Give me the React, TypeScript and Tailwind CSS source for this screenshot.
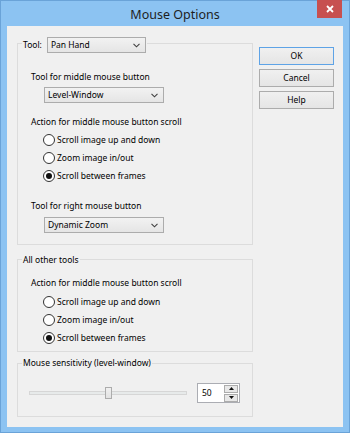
import React from "react";

const font = { fontFamily: '"Noto Sans", "Open Sans", sans-serif' };

// Win8 style combo box
const Combo = ({ value, width }: { value: string; width: string }) => (
  <div
    className={`${width} h-[16px] border border-[#acacac] bg-gradient-to-b from-[#f2f2f2] to-[#e5e5e5] flex items-center justify-between pl-[3px] pr-[5px]`}
  >
    <span className="text-[8.5px] leading-[14px] text-black">{value}</span>
    <svg width="7" height="5" viewBox="0 0 7 5">
      <polyline points="0.5,0.8 3.5,3.8 6.5,0.8" fill="none" stroke="#404040" strokeWidth="1.1" />
    </svg>
  </div>
);

const Radio = ({ label, checked }: { label: string; checked?: boolean }) => (
  <div className="h-[18px] flex items-center gap-[2px]">
    <div className="w-[12px] h-[12px] rounded-full border border-[#333333] bg-white flex items-center justify-center">
      {checked && <div className="w-[6px] h-[6px] rounded-full bg-[#111]" />}
    </div>
    <span className="text-[8.5px] leading-[14px] text-black">{label}</span>
  </div>
);

const Label = ({ children, className = "" }: { children: React.ReactNode; className?: string }) => (
  <div className={`h-[14px] text-[8.5px] leading-[14px] text-black ${className}`}>{children}</div>
);

const DlgButton = ({ label, primary }: { label: string; primary?: boolean }) => (
  <div
    className={`w-[75px] h-[18px] border ${primary ? "border-[#5ea3e6]" : "border-[#acacac]"} bg-gradient-to-b from-[#f0f0f0] to-[#e5e5e5] flex items-center justify-center text-[8.5px] text-black`}
  >
    {label}
  </div>
);

const ScrollRadios = () => (
  <div className="flex flex-col ml-[12px]">
    <Radio label="Scroll image up and down" />
    <Radio label="Zoom image in/out" />
    <Radio label="Scroll between frames" checked />
  </div>
);

export default function App() {
  return (
    <div className="w-[350px] h-[433px] bg-[#8cc3f2] border border-[#6aa3d8] flex flex-col select-none" style={font}>
      {/* title bar */}
      <div className="relative h-[25px] flex items-center justify-center">
        <span className="text-[12.5px] text-[#1e1e1e] mt-[3px]">Mouse Options</span>
        <div className="absolute -top-[1px] right-[7px] w-[25px] h-[18px] bg-[#c75050] flex items-center justify-center">
          <svg width="8" height="8" viewBox="0 0 8 8">
            <path d="M1 1 L7 7 M7 1 L1 7" stroke="white" strokeWidth="1.8" />
          </svg>
        </div>
      </div>

      {/* client area */}
      <div className="mx-[6px] h-[401px] bg-[#f0f0f0] flex pl-[10px] pt-[17px]">
        <div className="w-[236px] flex flex-col">
          {/* Tool group */}
          <div className="h-[202px] border border-[#dcdcdc] flex flex-col">
            <div className="-mt-[7px] ml-[4px] self-start bg-[#f0f0f0] px-[1px] h-[16px] flex items-center gap-[5px]">
              <span className="text-[8.5px] leading-[14px] text-black">Tool:</span>
              <Combo value="Pan Hand" width="w-[99px]" />
            </div>
            <div className="pl-[13px] flex flex-col">
              <Label className="mt-[17px]">Tool for middle mouse button</Label>
              <div className="mt-[3px] ml-[13px]">
                <Combo value="Level-Window" width="w-[120px]" />
              </div>
              <Label className="mt-[12px]">Action for middle mouse button scroll</Label>
              <div className="mt-[2px]">
                <ScrollRadios />
              </div>
              <Label className="mt-[14px]">Tool for right mouse button</Label>
              <div className="mt-[4px] ml-[13px]">
                <Combo value="Dynamic Zoom" width="w-[120px]" />
              </div>
            </div>
          </div>

          {/* All other tools group */}
          <div className="mt-[14px] h-[93px] border border-[#dcdcdc] flex flex-col">
            <div className="-mt-[7px] ml-[4px] self-start bg-[#f0f0f0] px-[1px]">
              <Label>All other tools</Label>
            </div>
            <div className="pl-[13px] flex flex-col">
              <Label className="mt-[9px]">Action for middle mouse button scroll</Label>
              <div className="mt-[3px]">
                <ScrollRadios />
              </div>
            </div>
          </div>

          {/* Sensitivity group */}
          <div className="mt-[11px] h-[54px] border border-[#dcdcdc] flex flex-col">
            <div className="-mt-[8px] ml-[4px] self-start bg-[#f0f0f0] px-[1px]">
              <Label>Mouse sensitivity (level-window)</Label>
            </div>
            <div className="mt-[13px] pl-[11px] flex items-center">
              <div className="relative w-[158px] h-[4px] border border-[#d6d6d6] bg-[#e7eaea]">
                <div className="absolute left-[75px] -top-[5px] w-[7px] h-[12px] border border-[#acacac] bg-gradient-to-b from-[#f0f0f0] to-[#e2e2e2]" />
              </div>
              <div className="ml-[10px] w-[43px] h-[20px] border border-[#abadb3] bg-white flex items-center justify-between">
                <span className="pl-[4px] text-[8.5px] leading-[14px] text-black">50</span>
                <div className="h-full flex flex-col justify-center gap-[1px] pr-[1px]">
                  <div className="w-[14px] h-[8px] border border-[#acacac] bg-[#e8e8e8] flex items-center justify-center">
                    <svg width="5" height="3" viewBox="0 0 5 3"><polygon points="0,3 2.5,0 5,3" fill="#111" /></svg>
                  </div>
                  <div className="w-[14px] h-[8px] border border-[#acacac] bg-[#e8e8e8] flex items-center justify-center">
                    <svg width="5" height="3" viewBox="0 0 5 3"><polygon points="0,0 2.5,3 5,0" fill="#111" /></svg>
                  </div>
                </div>
              </div>
            </div>
          </div>
        </div>

        {/* buttons */}
        <div className="ml-[6px] mt-[4px] flex flex-col gap-[4px]">
          <DlgButton label="OK" primary />
          <DlgButton label="Cancel" />
          <DlgButton label="Help" />
        </div>
      </div>
    </div>
  );
}
